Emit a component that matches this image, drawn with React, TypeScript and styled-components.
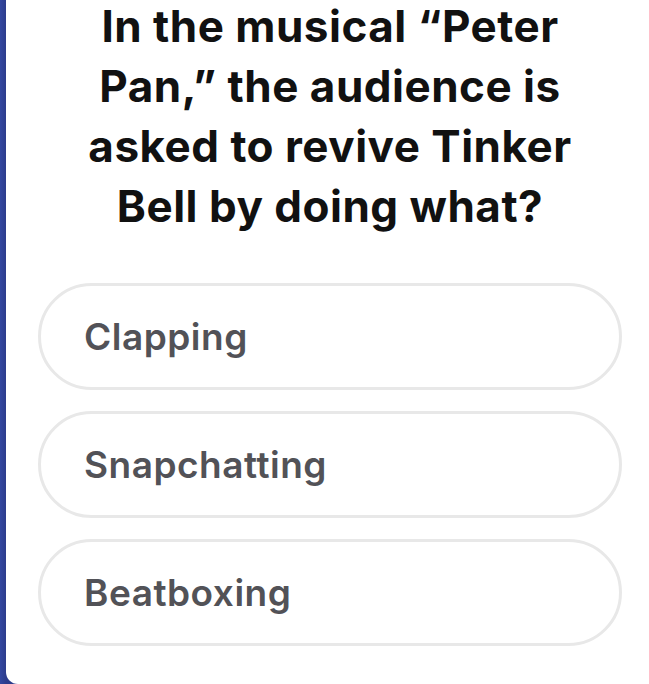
import React from "react";
import styled, { createGlobalStyle } from "styled-components";

const GlobalStyle = createGlobalStyle`
  html, body {
    margin: 0;
    padding: 0;
    width: 649px;
    height: 684px;
    overflow: hidden;
    background: #2f3f8f;
  }
  #root { height: 684px; }
`;

const Page = styled.div`
  display: flex;
  height: 684px;
  background: linear-gradient(90deg, #3347a0 0px, #2c3c8c 6px);
`;

const Card = styled.div`
  margin-left: 6px;
  flex: 1;
  height: 684px;
  background: #ffffff;
  border-bottom-left-radius: 12px;
  box-sizing: border-box;
  padding: 0 27px 0 32px;
  display: flex;
  flex-direction: column;
  font-family: Inter, "Open Sans", sans-serif;
`;

const Question = styled.h1`
  margin: -4px 0 0;
  text-align: center;
  font-size: 44px;
  line-height: 60px;
  font-weight: 700;
  letter-spacing: 0.5px;
  color: #111111;
  padding: 0 30px;
`;

const Options = styled.div`
  display: flex;
  flex-direction: column;
  gap: 21px;
  margin-top: 47px;
`;

const Option = styled.button`
  display: flex;
  align-items: center;
  height: 107px;
  box-sizing: border-box;
  border: 3px solid #e8e8e8;
  border-radius: 54px;
  background: #ffffff;
  padding: 0 0 0 43px;
  font-family: inherit;
  font-size: 37px;
  font-weight: 600;
  letter-spacing: 0.5px;
  color: #525257;
  text-align: left;
`;

const answers = ["Clapping", "Snapchatting", "Beatboxing"];

export default function App() {
  return (
    <>
      <GlobalStyle />
      <Page>
        <Card>
          <Question>
            In the musical “Peter Pan,” the audience is asked to revive Tinker
            Bell by doing what?
          </Question>
          <Options>
            {answers.map((a) => (
              <Option key={a}>{a}</Option>
            ))}
          </Options>
        </Card>
      </Page>
    </>
  );
}
